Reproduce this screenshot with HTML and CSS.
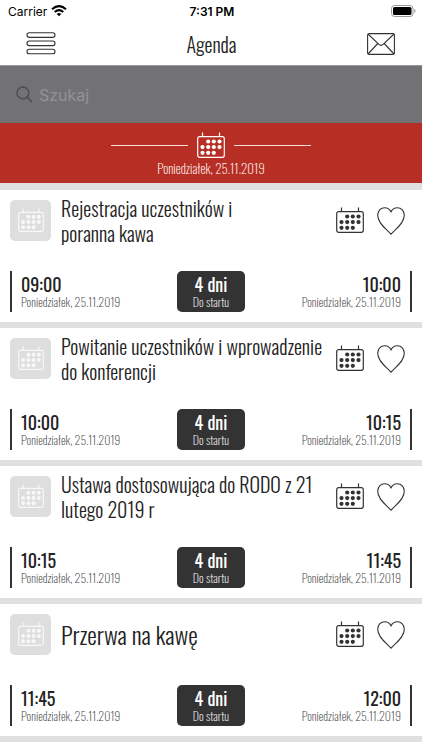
FILE: index.html
```html
<!DOCTYPE html>
<html lang="pl">
<head>
<meta charset="utf-8">
<meta name="viewport" content="width=device-width, initial-scale=1">
<title>Agenda</title>
<link rel="stylesheet" href="styles.css">
</head>
<body>
<svg class="defs" aria-hidden="true">
  <symbol id="calendar" viewBox="0 0 28 27">
    <rect x="0.7" y="4.7" width="26.6" height="20.6" rx="2" fill="none" stroke="currentColor" stroke-width="1.2"/>
    <path d="M5.5 0.5v4M22.5 0.5v4" fill="none" stroke="currentColor" stroke-width="1.2"/>
    <g fill="currentColor">
      <circle cx="11.2" cy="9.5" r="2.1"/><circle cx="16.8" cy="9.5" r="2.1"/><circle cx="22.5" cy="9.5" r="2.1"/>
      <circle cx="5.5" cy="15.1" r="2.1"/><circle cx="11.2" cy="15.1" r="2.1"/><circle cx="16.8" cy="15.1" r="2.1"/><circle cx="22.5" cy="15.1" r="2.1"/>
      <circle cx="5.5" cy="20.8" r="2.1"/><circle cx="11.2" cy="20.8" r="2.1"/><circle cx="16.8" cy="20.8" r="2.1"/>
    </g>
  </symbol>
  <symbol id="heart" viewBox="0 0 28 28">
    <path d="M14 27.3C10.500 22.500 0.700 17 0.700 8.300C0.700 4 3.700 0.800 7.600 0.800C10.600 0.800 12.900 2.300 14 5C15.100 2.300 17.400 0.800 20.400 0.800C24.300 0.800 27.300 4 27.300 8.300C27.300 17 17.500 22.500 14 27.300Z" fill="none" stroke="currentColor" stroke-width="1.100" stroke-linejoin="round"/>
  </symbol>
</svg>
<header>
  <div class="status">
    <span class="carrier">Carrier
      <svg width="16" height="12" viewBox="0 0 16 12" aria-hidden="true"><g fill="none" stroke="#000" stroke-width="2.1"><path d="M1 4.200Q8-2 15 4.200"/><path d="M3.700 7Q8 3.200 12.300 7"/></g><path d="M5.700 8.900Q8 7 10.300 8.900L8 11.300Z"/></svg>
    </span>
    <span class="clock">7:31 PM</span>
    <svg class="battery" width="25" height="12" viewBox="0 0 25 12" aria-hidden="true"><rect x="0.500" y="0.500" width="21.500" height="11" rx="3" fill="none" stroke="#999"/><rect x="2" y="2" width="18.500" height="8" rx="1.600"/><path d="M23.300 4v4q1.300-.6 1.300-2t-1.300-2z" fill="#999"/></svg>
  </div>
  <nav class="bar">
    <button class="icon" aria-label="Menu"><svg width="30" height="23" viewBox="0 0 30 23"><g fill="none" stroke="#333" stroke-width="1.100"><rect x="1" y="0.800" width="28" height="4.600" rx="2.300"/><rect x="1" y="9" width="28" height="4.600" rx="2.300"/><rect x="1" y="17.200" width="28" height="4.600" rx="2.300"/></g></svg></button>
    <h1>Agenda</h1>
    <button class="icon" aria-label="Wiadomości"><svg width="28" height="22" viewBox="0 0 28 22"><g fill="none" stroke="#333" stroke-width="1.100"><rect x="0.600" y="0.600" width="26.800" height="20.800" rx="1.500"/><path d="M1 1L11.600 11.200Q14 13.400 16.400 11.200L27 1M1 21L10.800 10.500M27 21L17.200 10.500"/></g></svg></button>
  </nav>
</header>
<main>
  <label class="search">
    <svg width="17" height="17" viewBox="0 0 17 17" aria-hidden="true"><circle cx="6.900" cy="6.900" r="5.900" fill="none" stroke="#4d4d50" stroke-width="1.400"/><path d="M11.200 11.200L16 16" stroke="#4d4d50" stroke-width="1.600"/></svg>
    <input type="search" placeholder="Szukaj" aria-label="Szukaj">
  </label>
  <section class="day">
    <div class="rule"><svg width="28" height="27" aria-hidden="true"><use href="#calendar"/></svg></div>
    <p>Poniedziałek, 25.11.2019</p>
  </section>

  <article class="card">
    <div class="top">
      <span class="tile"><svg width="26" height="25" aria-hidden="true"><use href="#calendar"/></svg></span>
      <h2>Rejestracja uczestników i<br>poranna kawa</h2>
      <button class="icon" aria-label="Dodaj do kalendarza"><svg width="28" height="27"><use href="#calendar"/></svg></button>
      <button class="icon" aria-label="Ulubione"><svg width="28" height="28"><use href="#heart"/></svg></button>
    </div>
    <div class="times">
      <div class="time"><strong>09:00</strong><span>Poniedziałek, 25.11.2019</span></div>
      <div class="badge"><strong>4 dni</strong><span>Do startu</span></div>
      <div class="time end"><strong>10:00</strong><span>Poniedziałek, 25.11.2019</span></div>
    </div>
  </article>

  <article class="card">
    <div class="top">
      <span class="tile"><svg width="26" height="25" aria-hidden="true"><use href="#calendar"/></svg></span>
      <h2>Powitanie uczestników i wprowadzenie<br>do konferencji</h2>
      <button class="icon" aria-label="Dodaj do kalendarza"><svg width="28" height="27"><use href="#calendar"/></svg></button>
      <button class="icon" aria-label="Ulubione"><svg width="28" height="28"><use href="#heart"/></svg></button>
    </div>
    <div class="times">
      <div class="time"><strong>10:00</strong><span>Poniedziałek, 25.11.2019</span></div>
      <div class="badge"><strong>4 dni</strong><span>Do startu</span></div>
      <div class="time end"><strong>10:15</strong><span>Poniedziałek, 25.11.2019</span></div>
    </div>
  </article>

  <article class="card">
    <div class="top">
      <span class="tile"><svg width="26" height="25" aria-hidden="true"><use href="#calendar"/></svg></span>
      <h2>Ustawa dostosowująca do RODO z 21<br>lutego 2019 r</h2>
      <button class="icon" aria-label="Dodaj do kalendarza"><svg width="28" height="27"><use href="#calendar"/></svg></button>
      <button class="icon" aria-label="Ulubione"><svg width="28" height="28"><use href="#heart"/></svg></button>
    </div>
    <div class="times">
      <div class="time"><strong>10:15</strong><span>Poniedziałek, 25.11.2019</span></div>
      <div class="badge"><strong>4 dni</strong><span>Do startu</span></div>
      <div class="time end"><strong>11:45</strong><span>Poniedziałek, 25.11.2019</span></div>
    </div>
  </article>

  <article class="card">
    <div class="top">
      <span class="tile"><svg width="26" height="25" aria-hidden="true"><use href="#calendar"/></svg></span>
      <h2 class="short">Przerwa na kawę</h2>
      <button class="icon" aria-label="Dodaj do kalendarza"><svg width="28" height="27"><use href="#calendar"/></svg></button>
      <button class="icon" aria-label="Ulubione"><svg width="28" height="28"><use href="#heart"/></svg></button>
    </div>
    <div class="times">
      <div class="time"><strong>11:45</strong><span>Poniedziałek, 25.11.2019</span></div>
      <div class="badge"><strong>4 dni</strong><span>Do startu</span></div>
      <div class="time end"><strong>12:00</strong><span>Poniedziałek, 25.11.2019</span></div>
    </div>
  </article>
</main>
</body>
</html>
```
FILE: styles.css
```css
* { box-sizing: border-box; }
body {
  margin: 0;
  background: #fff;
  color: #222;
  font-family: Oswald, "Liberation Sans Narrow", "Liberation Sans", sans-serif;
  font-weight: 200;
}
h1, h2, p { margin: 0; }
h1, h2 { font-weight: 300; }
svg { display: block; }
strong { font-weight: 400; }
.defs { position: absolute; width: 0; height: 0; }
.icon {
  display: block;
  padding: 0;
  border: 0;
  background: none;
  color: #333;
}
.status {
  display: grid;
  grid-template-columns: 1fr auto 1fr;
  align-items: center;
  height: 22px;
  padding: 0 6px 0 8px;
  color: #000;
  font-family: Inter, sans-serif;
  font-size: 12px;
  font-weight: 400;
}
.carrier { display: flex; align-items: center; gap: 4px; }
.clock { font-weight: 600; }
.battery { justify-self: end; }
.bar {
  display: flex;
  align-items: center;
  justify-content: space-between;
  height: 43px;
  padding: 0 27px 0 26px;
}
h1 { font-size: 20px; line-height: 24px; }
.search {
  display: flex;
  align-items: center;
  gap: 6px;
  height: 58px;
  padding: 0 16px;
  border-top: 1px solid #999;
  background: #727274;
}
.search input {
  flex: 1;
  min-width: 0;
  padding: 0;
  border: 0;
  outline: 0;
  background: none;
  color: #fff;
  font: 16px Inter, sans-serif;
}
.search input::placeholder { color: #929297; opacity: 1; }
.day {
  height: 60px;
  padding-top: 9px;
  background: #b72f24;
  color: #fff;
  text-align: center;
}
.rule {
  display: flex;
  align-items: center;
  justify-content: center;
  gap: 9px;
}
.rule::before, .rule::after {
  content: "";
  width: 18.2%;
  height: 1px;
  background: #f7dcd9;
}
.day p { font-size: 13px; line-height: 18px; }
.card {
  padding: 10px;
  border-top: 6px solid #e0e0e0;
}
.day + .card { border-top-width: 7px; }
.card:last-child { border-bottom: 6px solid #e0e0e0; }
.top { display: flex; align-items: center; height: 41px; gap: 13px; }
.tile {
  display: flex;
  align-items: center;
  justify-content: center;
  width: 41px;
  height: 41px;
  border-radius: 5px;
  background: #dedede;
  color: #f8f8f8;
}
h2 {
  flex: 1;
  margin-left: -3px;
  font-size: 20px;
  line-height: 25px;
  white-space: nowrap;
}
h2.short { font-size: 24px; }
.top .icon:last-child { margin-right: 7px; }
.times {
  display: grid;
  grid-template-columns: 1fr 68px 1fr;
  height: 41px;
  margin-top: 30px;
}
.time, .badge { display: flex; flex-direction: column; justify-content: center; }
.time { padding: 0 9px; border-left: 2px solid #333; }
.time.end { border-left: 0; border-right: 2px solid #333; text-align: right; }
.times strong { font-size: 18px; line-height: 20px; }
.times span { font-size: 12px; line-height: 16px; }
.time span { color: #444; }
.badge { border-radius: 5px; background: #333; color: #fff; text-align: center; }
```
